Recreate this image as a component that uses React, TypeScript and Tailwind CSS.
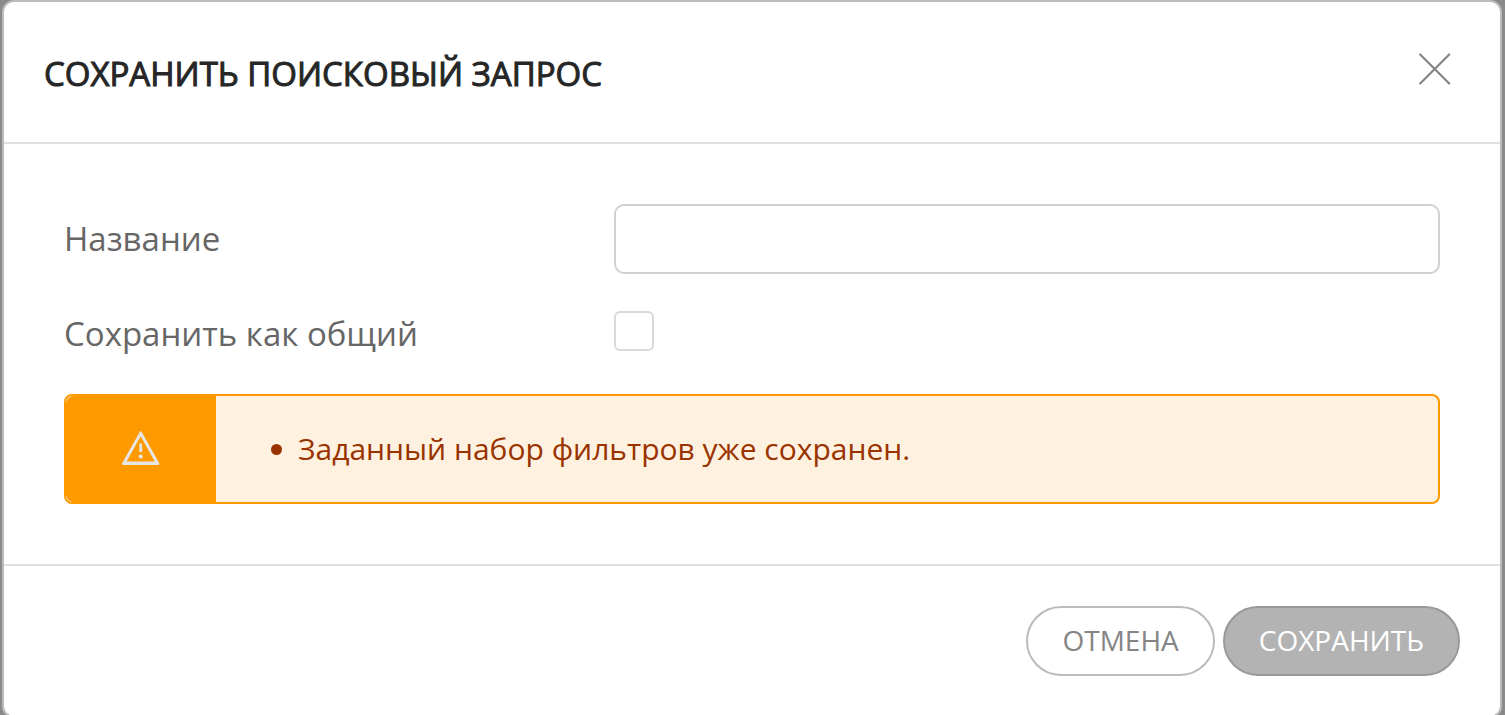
import React from "react";

const CloseIcon: React.FC = () => (
  <svg width="32" height="32" viewBox="0 0 32 32" fill="none" stroke="#858585" strokeWidth="2.2" strokeLinecap="round">
    <path d="M1.2 1.5L30.2 30.5M30.2 1.5L1.2 30.5" />
  </svg>
);

const WarningIcon: React.FC = () => (
  <svg width="38" height="36" viewBox="0 0 38 36" fill="none">
    <path
      d="M18 0.6Q18.7 0 19.4 0.6L37.4 32.6Q37.4 33.8 36.4 34H1Q0 33.8 0 32.6ZM18.7 5.2L4.6 30.6H32.8Z"
      fill="#e6e6e6"
      fillRule="evenodd"
    />
    <path d="M18.7 12.5V21" stroke="#e6e6e6" strokeWidth="2.8" />
    <circle cx="18.7" cy="25.5" r="2.1" fill="#e6e6e6" />
  </svg>
);

const App: React.FC = () => {
  return (
    <div className="min-h-screen bg-[#8a8a8a] pl-[2px] pr-[3px] font-['Open_Sans',sans-serif]">
      <div role="dialog" aria-labelledby="dialog-title" className="bg-white border-2 border-[#bbbbbb] rounded-xl">
        <div className="flex items-start justify-between h-[142px] pt-12 pl-10 pr-[46px] border-b-2 border-[#e0e0e0]">
          <h2
            id="dialog-title"
            className="text-[33px] leading-[48px] font-normal text-[#262626] uppercase [-webkit-text-stroke:1px_#262626]"
          >
            Сохранить поисковый запрос
          </h2>
          <button type="button" aria-label="Закрыть" className="flex items-center justify-center size-[38px] cursor-pointer">
            <CloseIcon />
          </button>
        </div>

        <form id="save-form" className="p-15 text-[33px] leading-[48px] text-[#666666]">
          <div className="flex items-center">
            <label htmlFor="name" className="w-2/5">Название</label>
            <input id="name" type="text" className="w-3/5 h-[70px] px-4 border-2 border-[#d0d0d0] rounded-[10px] bg-white" />
          </div>
          <div className="flex items-start mt-9">
            <label htmlFor="shared" className="w-2/5">Сохранить как общий</label>
            <input
              id="shared"
              type="checkbox"
              className="appearance-none mt-px size-10 border-2 border-[#d9d9d9] rounded-md bg-white checked:bg-[#b3b3b3]"
            />
          </div>
          <div role="alert" className="flex mt-9 h-[110px] border-2 border-[#ff9900] rounded-lg bg-[#fff1df]">
            <div className="flex items-center justify-center w-[150px] rounded-l-lg bg-[#ff9900]">
              <WarningIcon />
            </div>
            <ul className="flex items-center pl-[55px] text-[30px] leading-[40px] text-[#993300]">
              <li className="flex items-center gap-4">
                <span className="size-[11px] rounded-full bg-[#993300]" />
                Заданный набор фильтров уже сохранен.
              </li>
            </ul>
          </div>
        </form>

        <div className="flex justify-end gap-2 p-10 border-t-2 border-[#e0e0e0] text-[28px] leading-[40px]">
          <button type="button" className="h-[70px] px-[34px] pb-[2px] border-2 border-[#bbbbbb] rounded-full text-[#858585] uppercase cursor-pointer">
            Отмена
          </button>
          <button
            type="submit"
            form="save-form"
            className="h-[70px] px-[34px] pb-[2px] border-2 border-[#999999] rounded-full bg-[#b3b3b3] text-white uppercase cursor-pointer"
          >
            Сохранить
          </button>
        </div>
      </div>
    </div>
  );
};
export default App;
